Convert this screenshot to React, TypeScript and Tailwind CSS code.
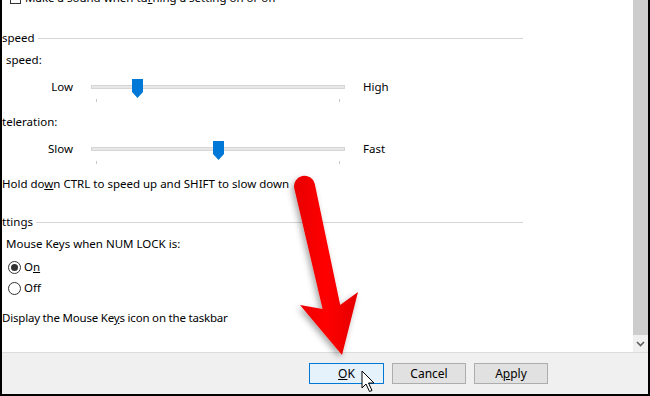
import React from "react";

function Heading({ label }: { label: string }) {
  return (
    <div className="flex items-center h-5 w-[521px]">
      <span className="shrink-0">{label}</span>
      <div className="flex-1 h-px bg-[#d5d5d5] ml-[3px]" />
    </div>
  );
}

interface SliderRowProps {
  low: string;
  high: string;
  thumb: number;
}

function SliderRow({ low, high, thumb }: SliderRowProps) {
  return (
    <div className="flex items-center h-[26px]">
      <span className="w-[71px] text-right shrink-0">{low}</span>
      <div className="relative w-[254px] h-[26px] ml-[18px] shrink-0 flex items-center">
        <div className="w-full h-[4px] bg-[#e7e7e7] border border-[#d6d6d6]" />
        {/* ticks */}
        <div className="absolute left-[5px] top-[25px] w-px h-[3px] bg-[#c8c8c8]" />
        <div className="absolute left-[248px] top-[25px] w-px h-[3px] bg-[#c8c8c8]" />
        {/* thumb */}
        <svg
          className="absolute top-[5px]"
          style={{ left: thumb }}
          width="11"
          height="19"
          viewBox="0 0 11 19"
        >
          <path d="M0 0H11V13L5.5 19L0 13Z" fill="#0078d7" />
        </svg>
      </div>
      <span className="ml-[18px]">{high}</span>
    </div>
  );
}

function Radio({ label, checked }: { label: React.ReactNode; checked?: boolean }) {
  return (
    <div className="flex items-center h-5 pl-[6px]">
      <span className="w-[13px] h-[13px] rounded-full border border-[#333] flex items-center justify-center bg-white">
        {checked && <span className="w-[7px] h-[7px] rounded-full bg-[#333]" />}
      </span>
      <span className="ml-[3px]">{label}</span>
    </div>
  );
}

function Button({ children, primary }: { children: React.ReactNode; primary?: boolean }) {
  return (
    <button
      className={
        primary
          ? "w-[75px] h-[21px] border border-[#0078d7] bg-[#e5f1fb] text-[12px] leading-none"
          : "w-[74px] h-[21px] border border-[#adadad] bg-[#e1e1e1] text-[12px] leading-none"
      }
    >
      {children}
    </button>
  );
}

export default function App() {
  return (
    <div className="relative w-[650px] h-[396px] overflow-hidden font-['Noto_Sans',sans-serif] text-[11.5px] text-black">
      <div className="w-full h-full flex flex-col bg-white border-l-2 border-r-2 border-b-2 border-black">
        <div className="flex flex-1 min-h-0">
          {/* scrolled content */}
          <div className="flex-1 overflow-hidden flex flex-col">
            <div className="flex items-center h-5 mt-[-12px] pl-[8px]">
              <span className="w-[11px] h-[11px] border border-[#333] bg-white" />
              <span className="ml-[4px]">
                Make a sound when tu<u>r</u>ning a setting on or off
              </span>
            </div>

            <div className="mt-[20px]">
              <Heading label="speed" />
            </div>
            <div className="h-5 flex items-center mt-[2px] pl-[4px]">speed:</div>

            <div className="mt-[4px]">
              <SliderRow low="Low" high="High" thumb={41} />
            </div>

            <div className="h-5 flex items-center mt-[12px]">teleration:</div>

            <div className="mt-[4px]">
              <SliderRow low="Slow" high="Fast" thumb={122} />
            </div>

            <div className="h-5 flex items-center mt-[12px]">
              <span>
                Hold do<u>w</u>n CTRL to speed up and SHIFT to slow down
              </span>
            </div>

            <div className="mt-[18px]">
              <Heading label="ttings" />
            </div>
            <div className="h-5 flex items-center mt-[2px] pl-[4px]">
              Mouse Keys when NUM LOCK is:
            </div>

            <div className="mt-[3px]">
              <Radio
                checked
                label={
                  <>
                    O<u>n</u>
                  </>
                }
              />
            </div>
            <div className="mt-[1px]">
              <Radio label="Off" />
            </div>

            <div className="h-5 flex items-center mt-[10px]">
              <span className="tracking-[-0.2px]">
                Display the Mouse Ke<u>y</u>s icon on the taskbar
              </span>
            </div>
          </div>

          {/* scrollbar */}
          <div className="w-[15px] shrink-0 bg-[#f0f0f0] flex flex-col">
            <div className="flex-1 bg-[#cdcdcd]" />
            <div className="h-[17px] flex items-center justify-center">
              <svg width="9" height="6" viewBox="0 0 9 6">
                <path d="M1 1L4.5 4.5L8 1" fill="none" stroke="#606060" strokeWidth="1.6" />
              </svg>
            </div>
          </div>
        </div>

        {/* button bar */}
        <div className="h-[42px] shrink-0 border-t border-[#dcdcdc] bg-[#f0f0f0] flex items-center justify-end gap-2 pr-[100px]">
          <Button primary>
            <u>O</u>K
          </Button>
          <Button>Cancel</Button>
          <Button>
            A<u>p</u>ply
          </Button>
        </div>
      </div>

      {/* red annotation arrow + mouse pointer */}
      <svg
        className="absolute left-0 top-0 pointer-events-none"
        width="650"
        height="396"
        viewBox="0 0 650 396"
      >
        <defs>
          <filter id="shadow" x="-50%" y="-20%" width="200%" height="140%">
            <feDropShadow dx="-2" dy="3" stdDeviation="3" floodColor="#000" floodOpacity="0.35" />
          </filter>
          <linearGradient id="red" x1="0" y1="0" x2="1" y2="0">
            <stop offset="0" stopColor="#e80000" />
            <stop offset="0.5" stopColor="#ff0000" />
            <stop offset="1" stopColor="#e40000" />
          </linearGradient>
        </defs>
        <path
          d="M294.25 188.27A10.5 10.5 0 0 1 314.75 183.73L340.2 305.1L358 292L342 355L300 305L322.6 309Z"
          fill="url(#red)"
          filter="url(#shadow)"
        />
        <path
          d="M362 371L362 388L366 384L369.5 391.5L372 390.5L368.5 383L374 383Z"
          fill="#fff"
          stroke="#000"
          strokeWidth="1"
          strokeLinejoin="round"
        />
      </svg>
    </div>
  );
}
